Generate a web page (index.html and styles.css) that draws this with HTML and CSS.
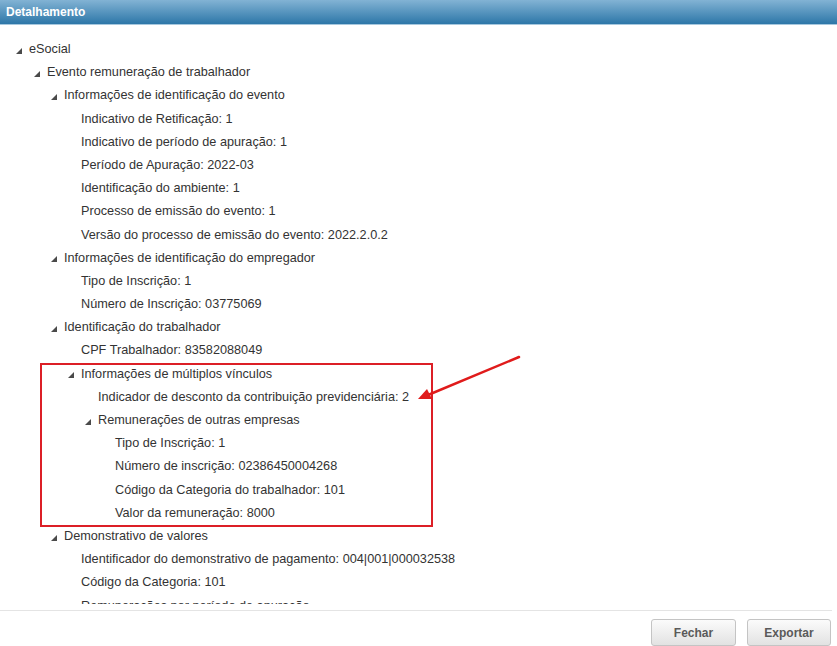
FILE: index.html
```html
<!DOCTYPE html>
<html lang="pt-BR">
<head>
    <meta charset="UTF-8">
    <title>Detalhamento</title>
    <link rel="stylesheet" href="styles.css">
</head>
<body>
    <div id="dialog">
        <div id="dialog-title">Detalhamento</div>

        <div id="dialog-content">
            <ul class="tree">
                <li class="node lv0"><span class="tri"></span>eSocial</li>
                <li class="node lv1"><span class="tri"></span>Evento remuneração de trabalhador</li>
                <li class="node lv2"><span class="tri"></span>Informações de identificação do evento</li>
                <li class="leaf lv3">Indicativo de Retificação: 1</li>
                <li class="leaf lv3">Indicativo de período de apuração: 1</li>
                <li class="leaf lv3">Período de Apuração: 2022-03</li>
                <li class="leaf lv3">Identificação do ambiente: 1</li>
                <li class="leaf lv3">Processo de emissão do evento: 1</li>
                <li class="leaf lv3">Versão do processo de emissão do evento: 2022.2.0.2</li>
                <li class="node lv2"><span class="tri"></span>Informações de identificação do empregador</li>
                <li class="leaf lv3">Tipo de Inscrição: 1</li>
                <li class="leaf lv3">Número de Inscrição: 03775069</li>
                <li class="node lv2"><span class="tri"></span>Identificação do trabalhador</li>
                <li class="leaf lv3">CPF Trabalhador: 83582088049</li>
                <li class="node lv3"><span class="tri"></span>Informações de múltiplos vínculos</li>
                <li class="leaf lv4">Indicador de desconto da contribuição previdenciária: 2</li>
                <li class="node lv4"><span class="tri"></span>Remunerações de outras empresas</li>
                <li class="leaf lv5">Tipo de Inscrição: 1</li>
                <li class="leaf lv5">Número de inscrição: 02386450004268</li>
                <li class="leaf lv5">Código da Categoria do trabalhador: 101</li>
                <li class="leaf lv5">Valor da remuneração: 8000</li>
                <li class="node lv2"><span class="tri"></span>Demonstrativo de valores</li>
                <li class="leaf lv3">Identificador do demonstrativo de pagamento: 004|001|000032538</li>
                <li class="leaf lv3">Código da Categoria: 101</li>
                <li class="leaf lv3">Remunerações por período de apuração</li>
            </ul>
        </div>

        <div id="dialog-footer">
            <button class="btn">Fechar</button>
            <button class="btn">Exportar</button>
        </div>

        <!-- marcação feita no print -->
        <div class="mark-box"></div>
        <svg class="mark-arrow" width="110" height="50" viewBox="0 0 110 50">
            <line x1="105" y1="3" x2="14" y2="41" stroke="#e01b1b" stroke-width="2.5" stroke-linecap="round"/>
            <polygon points="4,45 13,35 18,45" fill="#e01b1b"/>
        </svg>
    </div>
</body>
</html>
```

FILE: styles.css
```css
body {
    margin: 0;
    padding: 0;
    background: #ffffff;
    font-family: "Liberation Sans", Arial, sans-serif;
}

#dialog {
    position: relative;
    width: 837px;
    height: 646px;
    display: flex;
    flex-direction: column;
    background: #ffffff;
    overflow: hidden;
}

#dialog-title {
    flex: none;
    height: 24px;
    line-height: 24px;
    padding-left: 6px;
    color: #ffffff;
    font-size: 12px;
    font-weight: bold;
    background: linear-gradient(to bottom, #82b3d4, #2d77a8);
    border-bottom: 1px solid #a7c8de;
}

#dialog-content {
    flex: 1;
    overflow: hidden;
    padding-top: 13px;
    margin-bottom: 6px;
}

.tree {
    list-style: none;
    margin: 0;
    padding: 0;
}

.tree li {
    height: 23.2px;
    line-height: 23.2px;
    font-size: 12.7px;
    color: #333333;
    white-space: nowrap;
    display: flex;
    align-items: center;
}

.tri {
    display: inline-block;
    width: 0;
    height: 0;
    border-bottom: 6px solid #4a4a4a;
    border-left: 6px solid transparent;
    margin-right: 7px;
    margin-top: 2px;
}

.node.lv0 { padding-left: 16px; }
.node.lv1 { padding-left: 34px; }
.node.lv2 { padding-left: 51px; }
.node.lv3 { padding-left: 68px; }
.node.lv4 { padding-left: 85px; }

.leaf.lv3 { padding-left: 81px; }
.leaf.lv4 { padding-left: 98px; }
.leaf.lv5 { padding-left: 115px; }

#dialog-footer {
    flex: none;
    height: 36px;
    margin-right: 5px;
    border-top: 1px solid #e4e4e4;
    display: flex;
    justify-content: flex-end;
    align-items: flex-start;
    gap: 11px;
    padding: 8px 1px 0 0;
    box-sizing: border-box;
}

.btn {
    width: 85px;
    height: 27px;
    font-family: "Liberation Sans", Arial, sans-serif;
    font-size: 12px;
    font-weight: bold;
    color: #5a5a5a;
    background: linear-gradient(to bottom, #fbfbfb, #e2e2e2);
    border: 1px solid #c4c4c4;
    border-radius: 3px;
    cursor: pointer;
}

.btn + .btn {
    width: 84px;
}

.mark-box {
    position: absolute;
    left: 40px;
    top: 363px;
    width: 389px;
    height: 160px;
    border: 2px solid #dc1f26;
}

.mark-arrow {
    position: absolute;
    left: 414px;
    top: 354px;
}
```
